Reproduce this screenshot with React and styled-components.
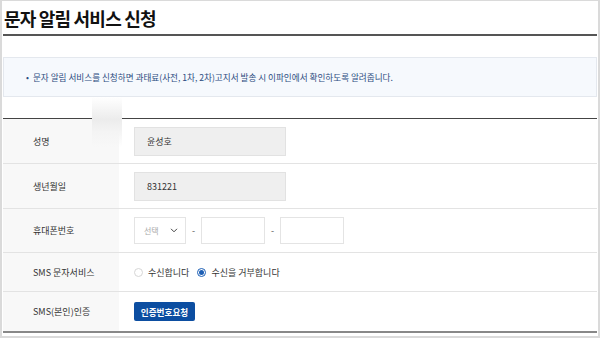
import React from "react";
import styled, { createGlobalStyle } from "styled-components";

const GlobalStyle = createGlobalStyle`
    html, body {
        margin: 0;
        padding: 0;
        background: #fff;
    }
    body {
        font-family: "Noto Sans CJK KR", "Noto Sans", sans-serif;
        color: #333;
    }
`;

const rows = [
    { label: "성명", height: 45, kind: "readonly", value: "윤성호" },
    { label: "생년월일", height: 45, kind: "readonly", value: "831221" },
    { label: "휴대폰번호", height: 44, kind: "phone" },
    { label: "SMS 문자서비스", height: 39, kind: "radio" },
    { label: "SMS(본인)인증", height: 39, kind: "button" },
];

const App = () => {
    const renderValue = (row) => {
        if (row.kind === "readonly") {
            return <ReadOnly>{row.value}</ReadOnly>;
        }
        if (row.kind === "phone") {
            return (
                <PhoneGroup>
                    <Select>
                        <span>선택</span>
                        <svg width="8" height="5" viewBox="0 0 8 5">
                            <path d="M1 0.8l3 3 3-3" fill="none" stroke="#444" strokeWidth="1" />
                        </svg>
                    </Select>
                    <Dash>-</Dash>
                    <PhoneInput />
                    <Dash>-</Dash>
                    <PhoneInput />
                </PhoneGroup>
            );
        }
        if (row.kind === "radio") {
            return (
                <RadioGroup>
                    <RadioItem>
                        <Radio />
                        수신합니다
                    </RadioItem>
                    <RadioItem>
                        <Radio checked />
                        수신을 거부합니다
                    </RadioItem>
                </RadioGroup>
            );
        }
        return <Button>인증번호요청</Button>;
    };

    return (
        <Frame>
            <GlobalStyle />
            <Header>
                <Title>문자 알림 서비스 신청</Title>
            </Header>
            <Notice>
                <NoticeText>문자 알림 서비스를 신청하면 과태료(사전, 1차, 2차)고지서 발송 시 이파인에서 확인하도록 알려줍니다.</NoticeText>
            </Notice>
            <Table>
                <Smudge />
                {rows.map((row) => (
                    <Row key={row.label} height={row.height}>
                        <Label>{row.label}</Label>
                        <Value>{renderValue(row)}</Value>
                    </Row>
                ))}
            </Table>
        </Frame>
    );
};

const Frame = styled.div`
    width: 600px;
    height: 338px;
    box-sizing: border-box;
    border: 2px solid #dadada;
    border-top-width: 1px;
    padding: 0 1px;
    overflow: hidden;
    background: #fff;
`;

const Header = styled.div`
    height: 33px;
    display: flex;
    align-items: center;
    border-bottom: 2px solid #555;
    padding-left: 1px;
`;

const Title = styled.h1`
    margin: 0;
    font-size: 18px;
    font-weight: 700;
    color: #111;
    letter-spacing: -0.8px;
`;

const Notice = styled.div`
    margin-top: 21px;
    height: 40px;
    box-sizing: border-box;
    background: #f6f9fd;
    border: 1px solid #e4e8ee;
    display: flex;
    align-items: center;
    padding-left: 22px;
`;

const NoticeText = styled.p`
    margin: 0;
    font-size: 8.6px;
    color: #2c4c80;

    &::before {
        content: "•";
        margin-right: 4px;
    }
`;

const Table = styled.div`
    position: relative;
    margin-top: 21px;
    border-top: 1px solid #444;
    border-bottom: 2px solid #888;
`;

const Smudge = styled.div`
    position: absolute;
    left: 89px;
    top: -22px;
    width: 30px;
    height: 50px;
    background: linear-gradient(#ffffff, #ececec 45%, #f4f4f4 70%, rgba(248, 248, 248, 0));
    pointer-events: none;
`;

const Row = styled.div`
    display: grid;
    grid-template-columns: 116px 1fr;
    box-sizing: border-box;
    height: ${(props) => props.height}px;
    border-bottom: 1px solid #e3e3e3;

    &:last-of-type {
        border-bottom: none;
    }
`;

const Label = styled.div`
    background: #f8f8f8;
    display: flex;
    align-items: center;
    padding-left: 30px;
    font-size: 9px;
    color: #333;
`;

const Value = styled.div`
    display: flex;
    align-items: center;
    padding-left: 15px;
    font-size: 9px;
    color: #333;
`;

const ReadOnly = styled.div`
    width: 152px;
    height: 29px;
    box-sizing: border-box;
    background: #efefef;
    border: 1px solid #e2e2e2;
    display: flex;
    align-items: center;
    padding-left: 12px;
`;

const PhoneGroup = styled.div`
    display: flex;
    align-items: center;
`;

const Select = styled.div`
    width: 52px;
    height: 27px;
    box-sizing: border-box;
    border: 1px solid #e4e4e4;
    display: flex;
    align-items: center;
    justify-content: space-between;
    padding: 0 7px 0 9px;
    color: #aaa;
    font-size: 8px;
`;

const Dash = styled.span`
    width: 15px;
    text-align: center;
    color: #555;
`;

const PhoneInput = styled.div`
    width: 64px;
    height: 27px;
    box-sizing: border-box;
    border: 1px solid #e4e4e4;
`;

const RadioGroup = styled.div`
    display: flex;
    align-items: center;
    gap: 8px;
`;

const RadioItem = styled.label`
    display: flex;
    align-items: center;
    gap: 5px;
`;

const Radio = styled.span`
    width: 9px;
    height: 9px;
    box-sizing: border-box;
    border-radius: 50%;
    border: 1px solid ${(props) => (props.checked ? "#1d5fb5" : "#d6d6d6")};
    display: flex;
    align-items: center;
    justify-content: center;

    &::after {
        content: "";
        width: 5px;
        height: 5px;
        border-radius: 50%;
        background: ${(props) => (props.checked ? "#1d5fb5" : "transparent")};
    }
`;

const Button = styled.button`
    width: 61px;
    height: 19px;
    border: none;
    border-radius: 2px;
    background: #0c4ea1;
    color: #fff;
    font-family: "Noto Sans CJK KR", sans-serif;
    font-size: 8.6px;
    font-weight: 700;
    padding: 0;
`;

export default App;
